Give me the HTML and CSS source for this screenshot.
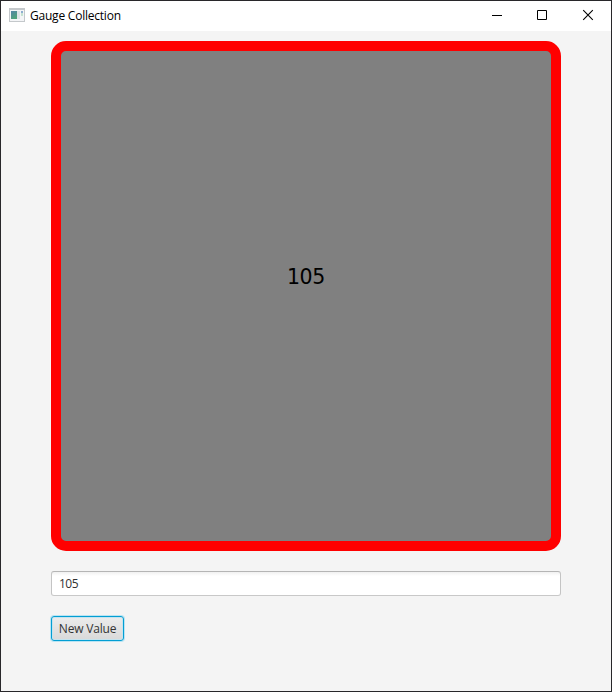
FILE: index.html
```html
<!DOCTYPE html>
<html lang="en">
<head>
<meta charset="utf-8">
<title>Gauge Collection</title>
<link rel="stylesheet" href="styles.css">
</head>
<body>
<div class="window">
  <header class="titlebar">
    <svg class="app-icon" width="16" height="14" viewBox="0 0 16 14" shape-rendering="crispEdges">
      <defs><linearGradient id="pane" x1="0" y1="0" x2="0.5" y2="1"><stop offset="0" stop-color="#5484a8"/><stop offset="1" stop-color="#50a37b"/></linearGradient></defs>
      <rect width="16" height="14" fill="#c4c8cb"/>
      <rect x="1" y="2" width="14" height="11" fill="#f4f5f7"/>
      <rect x="2" y="3" width="6" height="8" fill="url(#pane)"/>
      <rect x="8" y="3" width="3" height="8" fill="#dfe3e7"/>
      <rect x="12" y="3" width="2" height="2" fill="#8eaed0"/>
      <rect x="12" y="5" width="2" height="3" fill="#c5e2d2"/>
    </svg>
    <span class="title">Gauge Collection</span>
    <div class="controls">
      <svg width="46" height="30" viewBox="0 0 46 30"><path d="M19 14.5h10" stroke="#000"/></svg>
      <svg width="46" height="30" viewBox="0 0 46 30"><path d="M18.5 9.5h9v9h-9z" fill="none" stroke="#000"/></svg>
      <svg width="46" height="30" viewBox="0 0 46 30"><path d="M18.2 9.2l9.6 9.6M27.8 9.2l-9.6 9.6" stroke="#000" stroke-width="1.1"/></svg>
    </div>
  </header>
  <main class="content">
    <div class="gauge"><span class="gauge-value">105</span></div>
    <input class="field" type="text" value="105">
    <button class="button" type="button"><span class="button-label">New Value</span></button>
  </main>
</div>
</body>
</html>
```
FILE: styles.css
```css
* { box-sizing: border-box; }
body { margin: 0; font-family: "Open Sans", "Noto Sans", sans-serif; }
.window {
  width: 612px;
  height: 692px;
  border: 1px solid #28272a;
  background: #f4f4f4;
  overflow: hidden;
}
.titlebar {
  display: flex;
  align-items: center;
  height: 30px;
  padding-left: 8px;
  background: #fff;
}
.app-icon { margin-top: -2px; }
.title {
  margin-left: 5px;
  font-size: 12px;
  line-height: 16px;
  letter-spacing: -0.22px;
  color: #000;
  white-space: nowrap;
}
.controls { display: flex; margin-left: auto; }
.content {
  display: flex;
  flex-direction: column;
  align-items: flex-start;
  gap: 20px;
  padding: 10px 50px;
}
.gauge {
  display: flex;
  align-items: center;
  justify-content: center;
  width: 510px;
  height: 510px;
  border: 10px solid #f00;
  border-radius: 15px;
  background: #808080;
}
.gauge-value {
  margin-top: -38px;
  font: 20.5px/24px "DejaVu Sans", sans-serif;
  letter-spacing: -0.3px;
  color: #000;
}
.field {
  width: 510px;
  height: 25px;
  padding: 0 7px;
  border: 1px solid;
  border-color: #b5b5b5 #c4c4c4 #c8c8c8;
  border-radius: 3px;
  outline: none;
  background: linear-gradient(#f1f1f1, #fff 4px);
  font: 12px "Open Sans", "Noto Sans", sans-serif;
  letter-spacing: -0.5px;
  color: #323232;
}
.button {
  display: flex;
  align-items: center;
  justify-content: center;
  width: 73px;
  height: 25px;
  padding: 0;
  border: 1px solid #039ed3;
  border-radius: 3px;
  background: linear-gradient(#ececec, #d9d9d9);
  box-shadow: 0 0 0 1px #b9e4f3, inset 0 0 0 1px #c5e3ee;
  font: 12px "Open Sans", "Noto Sans", sans-serif;
  color: #333;
}
.button-label { letter-spacing: -0.2px; white-space: nowrap; }
```
